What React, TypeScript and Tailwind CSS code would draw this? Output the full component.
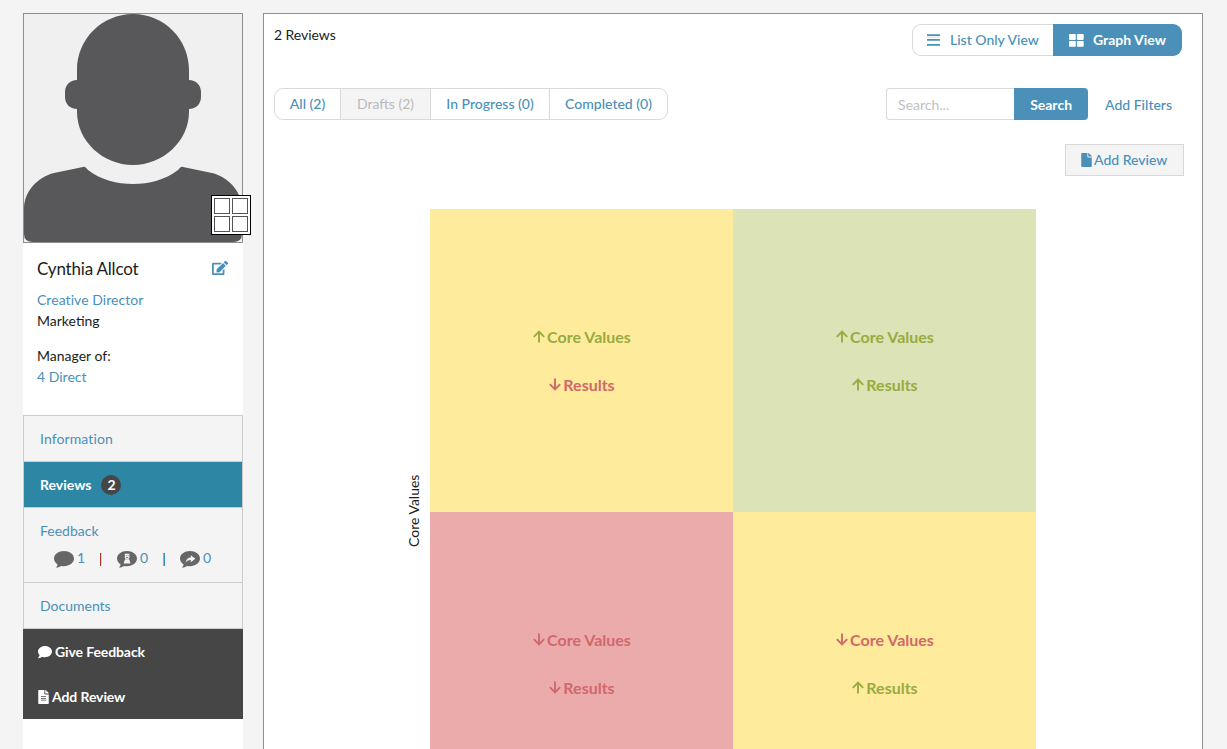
import { FaComment, FaEdit, FaFile, FaFileAlt } from 'react-icons/fa'

type Direction = 'up' | 'down'

type QuadrantProps = {
  bg: string
  coreValues: Direction
  results: Direction
}

const QUADRANTS: QuadrantProps[] = [
  { bg: 'bg-[#ffeb9c]', coreValues: 'up', results: 'down' },
  { bg: 'bg-[#dce3b6]', coreValues: 'up', results: 'up' },
  { bg: 'bg-[#ecabab]', coreValues: 'down', results: 'down' },
  { bg: 'bg-[#ffeb9c]', coreValues: 'down', results: 'up' },
]

function Avatar() {
  return (
    <svg width="218" height="228" viewBox="0 0 218 228" className="block" fill="#58585a">
      <path d="M109 0C78 0 53 25 53 56V66C46 66 41 71 41 78V83C41 90 46 95 53 95V98C53 127 79 151 109 151S165 127 165 98V95C172 95 177 90 177 83V78C177 71 172 66 165 66V56C165 25 140 0 109 0Z" />
      <path d="M59 153C61 152 62 154 64 156C77 166 93 170 109 170S141 166 154 156C156 154 157 152 159 153L188 159C204 163 218 177 218 195V220Q218 228 209 228H9Q0 228 0 220V195C0 177 14 163 30 159Z" />
    </svg>
  )
}

function Bubble({ kind }: { kind?: 'person' | 'share' }) {
  return (
    <svg width="20" height="17" viewBox="0 0 20 17">
      <path
        fill="#666"
        d="M10 0C4.500 0 0 3.300 0 7.600C0 10 1.400 12.100 3.600 13.500C3.500 14.600 2.900 15.500 1.900 16.400C4 16.500 5.900 15.800 7.300 14.900C8.200 15.100 9.100 15.200 10 15.200C15.500 15.200 20 11.900 20 7.600S15.500 0 10 0Z"
      />
      {kind === 'person' && (
        <g fill="#f4f4f4">
          <path d="M7.800 2.800h4.600v3.600a2.300 1.600 0 0 1-4.600 0z" />
          <path d="M8 8.200h4.200l1.300 4.400H6.700z" />
          <path d="M8.600 4.600h1M10.700 4.600h1M9 6.500h2.200" stroke="#666" strokeWidth=".8" />
        </g>
      )}
      {kind === 'share' && (
        <path
          d="M5.600 11.600C6.100 8 8.200 6.500 10.800 6.400V4.200L15.400 7.800L10.800 11.200V9C8.700 8.900 7.200 9.600 5.600 11.600Z"
          fill="#f4f4f4"
        />
      )}
    </svg>
  )
}

function ListIcon() {
  return (
    <svg width="13" height="12" viewBox="0 0 13 12" className="mr-2.5" fill="currentColor">
      <path d="M0 .2h13v1.700H0zM0 5h13v1.800H0zM0 10h13v1.800H0z" />
      <path d="M0 2.800h13v.7H0z" opacity=".4" />
    </svg>
  )
}

function GridIcon() {
  return (
    <svg width="15" height="13" viewBox="0 0 15 13" className="mr-[9px]" fill="currentColor">
      <rect width="6.800" height="5.900" rx=".8" />
      <rect x="7.900" width="6.800" height="5.900" rx=".8" />
      <rect y="6.900" width="6.800" height="5.900" rx=".8" />
      <rect x="7.900" y="6.900" width="6.800" height="5.900" rx=".8" />
    </svg>
  )
}

function Arrow({ dir }: { dir: Direction }) {
  return (
    <svg width="12" height="13" viewBox="0 0 12 13" fill="none" stroke="currentColor" strokeWidth="1.9" className="mr-0.5">
      {dir === 'up' ? <path d="M6 12.500V1.500M.8 6.800L6 1.600L11.200 6.800" /> : <path d="M6 .5V11.500M.8 6.200L6 11.400L11.200 6.200" />}
    </svg>
  )
}

function Trend({ dir, label }: { dir: Direction; label: string }) {
  return (
    <div className={`flex h-6 items-center ${dir === 'up' ? 'text-[#98ab41]' : 'text-[#d0686c]'}`}>
      <Arrow dir={dir} />
      {label}
    </div>
  )
}

function Quadrant({ bg, coreValues, results }: QuadrantProps) {
  return (
    <div className={`flex flex-col items-center justify-center gap-6 pl-px text-base font-bold ${bg}`}>
      <Trend dir={coreValues} label="Core Values" />
      <Trend dir={results} label="Results" />
    </div>
  )
}

function Sidebar() {
  return (
    <aside className="flex w-[220px] shrink-0 flex-col bg-white">
      <div className="relative h-[230px] shrink-0 border border-[#8e8f90] bg-[#f0f0f0]">
        <Avatar />
        <div className="absolute -right-[9px] bottom-[7px] grid h-10 w-10 grid-cols-2 gap-0.5 border border-black bg-white p-0.5">
          <span className="border border-[#555]" />
          <span className="border border-[#555]" />
          <span className="border border-[#555]" />
          <span className="border border-[#555]" />
        </div>
      </div>

      <div className="h-[172px] shrink-0 px-3.5 pt-[15px] leading-[21px]">
        <div className="flex items-center justify-between">
          <h2 className="text-[17px] leading-[22px] tracking-[-0.2px]">Cynthia Allcot</h2>
          <FaEdit className="mr-px mb-0.5 size-4 text-[#4a90b8]" />
        </div>
        <a className="mt-[9px] block tracking-[0.05px] text-[#4a90b8]">Creative Director</a>
        <p>Marketing</p>
        <p className="mt-3.5">Manager of:</p>
        <a className="block text-[#4a90b8]">4 Direct</a>
      </div>

      <nav className="border border-[#ccc] bg-[#f4f4f4] text-[#4a90b8]">
        <a className="flex h-[45px] items-center px-4 pt-px tracking-[0.1px]">Information</a>
        <a className="flex h-[47px] items-center border-y border-[#ccc] bg-[#2e86a5] px-4 font-bold text-white">
          Reviews
          <span className="ml-2.5 flex size-5 items-center justify-center rounded-full bg-[#464646]">2</span>
        </a>
        <div className="h-[74px] px-4 pt-3">
          <a className="block leading-[21px]">Feedback</a>
          <div className="flex h-9 items-center pl-3.5 leading-none">
            <div className="flex w-[46px] gap-[3px]"><Bubble />1</div>
            <span className="mr-[15px] h-[13px] w-0.5 border-l border-[#b0392d] bg-[#b5dcf0]" />
            <div className="flex w-[46px] gap-[3px]"><Bubble kind="person" />0</div>
            <span className="mr-[15px] h-[13px] w-0.5 border-l border-[#d9a054] bg-[#3b8fc0]" />
            <div className="flex gap-[3px]"><Bubble kind="share" />0</div>
          </div>
        </div>
        <a className="flex h-[46px] items-center border-t border-[#ccc] px-4">Documents</a>
      </nav>

      <div className="h-[90px] shrink-0 bg-[#464646] px-[15px] font-bold text-white">
        <a className="flex h-[45px] items-center gap-[3px] tracking-[-0.1px]">
          <FaComment className="size-3.5" />
          Give Feedback
        </a>
        <a className="flex h-[45px] items-center gap-[3px] tracking-[-0.1px]">
          <FaFileAlt className="h-3.5 w-[11px]" />
          Add Review
        </a>
      </div>
    </aside>
  )
}

export default function App() {
  return (
    <div className="flex h-screen gap-5 overflow-hidden bg-[#f4f4f4] pt-[13px] pl-[23px] font-['Lato',sans-serif] text-sm text-[#1b1c1d]">
      <Sidebar />

      <main className="flex w-[940px] shrink-0 flex-col border border-b-0 border-[#8e8f90] bg-white">
        <div className="flex h-[74px] shrink-0 items-start justify-between pt-2.5 pr-5 pl-[10px]">
          <p className="leading-[22px] tracking-[-0.05px]">2 Reviews</p>
          <div className="flex h-8 text-[#4a90b8]">
            <button className="flex w-[141px] items-center rounded-l-[9px] border border-r-0 border-[#d9d9d9] pl-3.5 font-medium">
              <ListIcon />
              List Only View
            </button>
            <button className="flex w-[129px] items-center rounded-r-[9px] bg-[#4a90b8] pl-4 font-bold text-white">
              <GridIcon />
              Graph View
            </button>
          </div>
        </div>

        <div className="flex shrink-0 justify-between pr-[30px] pl-[10px]">
          <div className="flex h-8 divide-x divide-[#d9d9d9] overflow-hidden rounded-[9px] border border-[#d9d9d9] font-medium text-[#4a90b8]">
            <button className="w-[66px]">All (2)</button>
            <button className="w-[90px] bg-[#f4f4f4] font-normal text-[#b9babb]">Drafts (2)</button>
            <button className="w-[119px]">In Progress (0)</button>
            <button className="w-[117px]">Completed (0)</button>
          </div>
          <div className="flex h-8 items-center">
            <input
              placeholder="Search..."
              className="h-8 w-32 rounded-l border border-r-0 border-[#d9d9d9] pt-px pl-[11px] placeholder:text-[#bfbfbf]"
            />
            <button className="mr-[17px] h-8 w-[74px] rounded-r bg-[#4a90b8] pt-0.5 font-bold text-white">Search</button>
            <a className="pt-0.5 font-medium text-[#4a90b8]">Add Filters</a>
          </div>
        </div>

        <button className="mt-6 mr-[18px] flex h-8 w-[119px] shrink-0 items-center self-end border border-[#d9d9d9] bg-[#f4f4f4] pl-[15px] font-medium text-[#4a90b8]">
          <FaFile className="mr-0.5 h-3.5 w-[11px]" />
          Add Review
        </button>

        <div className="mt-[33px] ml-[139px] flex h-[606px] shrink-0">
          <div className="flex w-[27px] items-center justify-center pr-[5px] pb-[5px]">
            <span className="h-[74px] rotate-180 whitespace-nowrap [writing-mode:vertical-rl]">Core Values</span>
          </div>
          <div className="grid w-[606px] grid-cols-2 grid-rows-2">
            {QUADRANTS.map((q, i) => (
              <Quadrant key={i} {...q} />
            ))}
          </div>
        </div>
      </main>
    </div>
  )
}
